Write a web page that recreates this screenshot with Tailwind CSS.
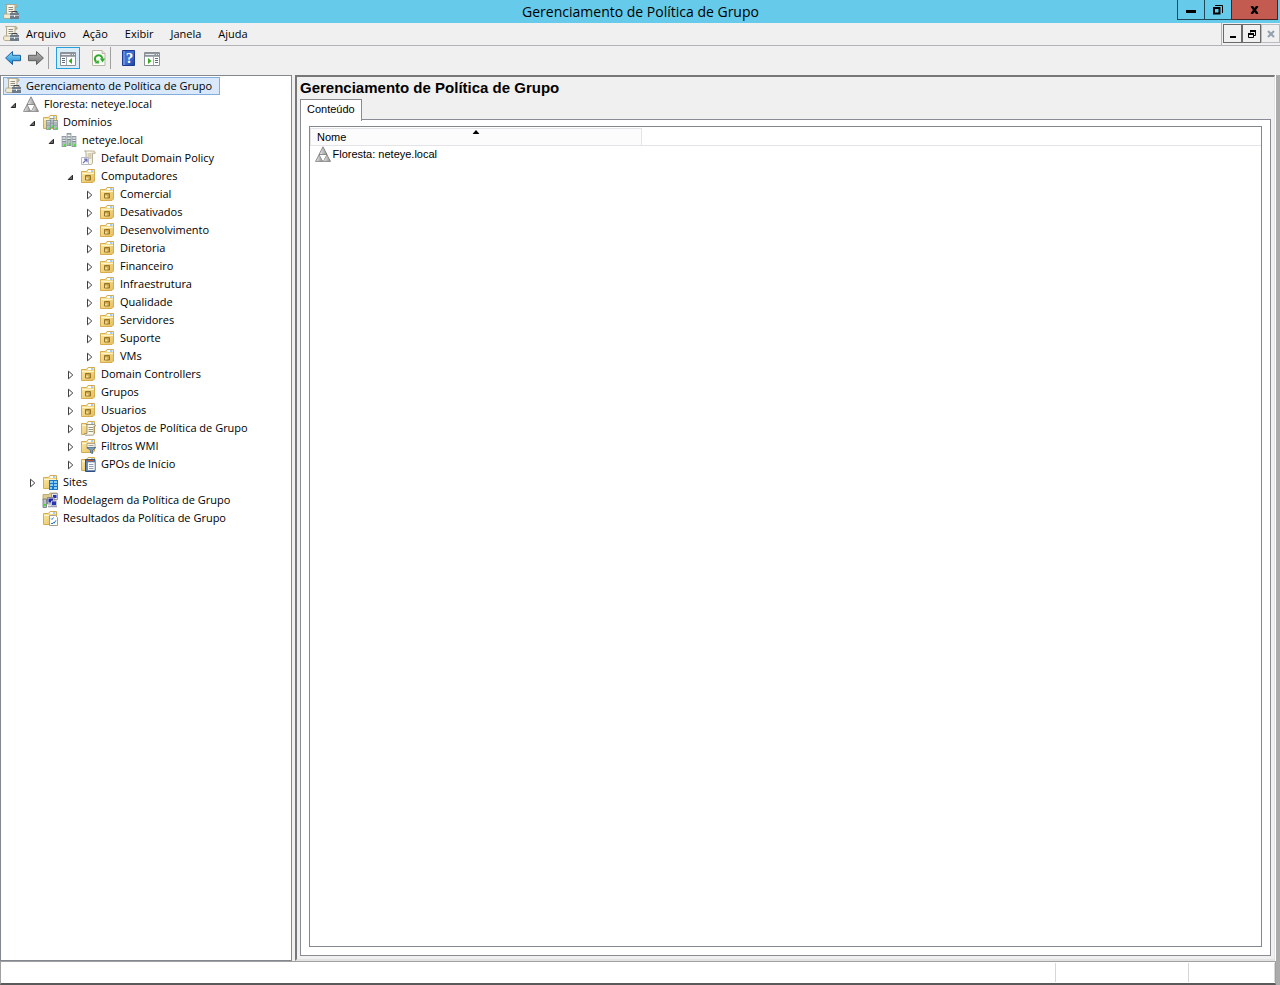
<!DOCTYPE html>
<html lang="pt-BR">
<head>
  <meta charset="UTF-8" />
  <meta name="viewport" content="width=device-width, initial-scale=1.0">
  <title>Gerenciamento de Política de Grupo</title>
  <script src="https://cdn.jsdelivr.net/npm/@tailwindcss/browser@4"></script>
</head>

<body class="h-screen flex flex-col overflow-hidden bg-[#f0f0f0] font-['Open_Sans','Noto_Sans',sans-serif] text-[11px] text-black cursor-default">

  <!-- Icon set -->
  <svg class="absolute size-0" aria-hidden="true">
    <defs>
      <linearGradient id="gFolder" x1="0" y1="0" x2="1" y2="1">
        <stop offset="0" stop-color="#fdeba6" /><stop offset="1" stop-color="#e6bd5c" />
      </linearGradient>
      <linearGradient id="gPaper" x1="0" y1="0" x2="1" y2="0">
        <stop offset="0" stop-color="#e4dabd" /><stop offset="0.3" stop-color="#fffdf2" /><stop offset="1" stop-color="#ece3c9" />
      </linearGradient>
      <linearGradient id="gBlue" x1="0" y1="0" x2="0" y2="1">
        <stop offset="0" stop-color="#8fdcfa" /><stop offset="1" stop-color="#1686d4" />
      </linearGradient>
      <linearGradient id="gGray" x1="0" y1="0" x2="0" y2="1">
        <stop offset="0" stop-color="#b5b5b5" /><stop offset="1" stop-color="#737373" />
      </linearGradient>
      <linearGradient id="gTri" x1="0" y1="0" x2="1" y2="0">
        <stop offset="0" stop-color="#f0f0f0" /><stop offset="1" stop-color="#8f8f8f" />
      </linearGradient>
      <linearGradient id="gHelp" x1="0" y1="0" x2="1" y2="1">
        <stop offset="0" stop-color="#2f5fc4" /><stop offset="0.5" stop-color="#4672d0" /><stop offset="1" stop-color="#1d3fa0" />
      </linearGradient>
    </defs>

    <symbol id="i-console" viewBox="0 0 16 16">
      <path d="M2.500 .5h10c1 0 1.500 1 1.500 2.500h-2V12H3.500V3C3.500 1.500 3.500.5 2.500.5z" fill="url(#gPaper)" stroke="#a69c80" stroke-width=".8" />
      <path d="M12 .5c1.200 0 2 .7 2 2.500h-2z" fill="#d8ccaa" stroke="#a69c80" stroke-width=".6" />
      <path d="M5.500 3.500H10M5.500 5.500H10M5.500 7.500H9" stroke="#8d8c86" />
      <path d="M.5 12c0-1.200.7-2 1.500-2h6v4.500H2c-.8 0-1.500-1-1.500-2.500z" fill="#f3ead0" stroke="#a69c80" stroke-width=".8" />
      <path d="M9 9V7.500h5V9" fill="none" stroke="#42484e" />
      <path d="M7 9h9v6H7z" fill="#6f7c89" />
      <path d="M7 11.500h9" stroke="#b4bfc9" />
      <path d="M11 11h1v2h-1z" fill="#f2f2f2" />
    </symbol>

    <symbol id="i-forest" viewBox="0 0 16 16">
      <path d="M8 .8 12 8.500H4z" fill="url(#gTri)" stroke="#777" stroke-width=".8" />
      <path d="M4.200 8.500 7.800 15.400H.5z" fill="url(#gTri)" stroke="#777" stroke-width=".8" />
      <path d="M11.800 8.500l3.700 6.900H8.200z" fill="url(#gTri)" stroke="#777" stroke-width=".8" />
      <path d="M4.900 9h6.200L8 14.800z" fill="#fff" />
    </symbol>

    <symbol id="i-folder" viewBox="0 0 16 16">
      <path d="M1.500 3.500h5l1.500-2h6.500v11.500l-1.500 1.500H1.500z" fill="url(#gFolder)" stroke="#d6ac50" />
      <path d="M8.500 2h5.500v2H8z" fill="#fff" />
      <path d="M11 3h2.500" stroke="#4e9de0" />
      <path d="M2 5.500h12" stroke="#fff4c8" />
    </symbol>

    <symbol id="i-ou" viewBox="0 0 16 16">
      <use href="#i-folder" />
      <path d="M5.500 7.500h5v4.500h-5z" fill="#c9a247" stroke="#94742a" />
      <path d="M6 9.500h2.500v2H6z" fill="#f3dc92" />
    </symbol>

    <symbol id="i-server" viewBox="0 0 5 10" preserveAspectRatio="none">
      <path d="M.3.300h4.400v9.400H.3z" fill="#b3bec3" stroke="#66737a" stroke-width=".6" />
      <path d="M1 2h3M1 4h3" stroke="#f6fafb" stroke-width=".9" />
      <path d="M1 3h3M1 5h3" stroke="#5d696e" stroke-width=".6" />
      <path d="M2.400 7.600h1.800v1.700H2.400z" fill="#45e02a" />
    </symbol>

    <symbol id="i-domains" viewBox="0 0 16 16">
      <use href="#i-folder" />
      <use href="#i-server" x="7.500" y="4" width="5" height="10" />
      <use href="#i-server" x="4" y="6" width="5" height="10" />
      <use href="#i-server" x="11" y="6" width="5" height="10" />
    </symbol>

    <symbol id="i-domain" viewBox="0 0 16 16">
      <use href="#i-server" x="5.500" y="1" width="5" height="13" />
      <use href="#i-server" x="0.500" y="4" width="5" height="11" />
      <use href="#i-server" x="10.500" y="4" width="5" height="11" />
    </symbol>

    <symbol id="i-policy" viewBox="0 0 16 16">
      <path d="M4.500 1h9c1.200 0 1.700.8 1.700 2.300h-2.700V12c0 1.500-.6 2.500-1.800 2.500H6V3c0-1.300-.5-2-1.500-2z" fill="url(#gPaper)" stroke="#a99f83" stroke-width=".8" />
      <path d="M7.500 4h4M7.500 6h4M8 8h3.500" stroke="#b0a98e" />
      <path d="M1.500 7.500h7v7h-7z" fill="#fff" stroke="#b8b8c4" />
      <path d="M3 13l3.500-3.500M4 9.200h3v3" fill="none" stroke="#6d70b8" stroke-width="1.200" />
    </symbol>

    <symbol id="i-gpos" viewBox="0 0 16 16">
      <use href="#i-folder" />
      <path d="M6 4.500h8.500c.8 0 1 .6 1 1.500H14v7.500c0 1-.5 1.700-1.300 1.700H5.500c-.8 0-1-.7-1-1.700H7V6c0-1-.3-1.500-1-1.500z" fill="#fbf8ec" stroke="#86806c" stroke-width=".8" />
      <path d="M8.500 7.500H13M8.500 9.500H13M8.500 11.500H13" stroke="#8e8a7a" stroke-width=".9" />
    </symbol>

    <symbol id="i-wmi" viewBox="0 0 16 16">
      <use href="#i-folder" />
      <path d="M7 5.500h8v5H7z" fill="#f8f6ea" stroke="#9a9482" stroke-width=".8" />
      <path d="M8.500 7.500h5" stroke="#8e8a7a" stroke-width=".8" />
      <path d="M7 9.500h8.800l-3.300 3v3.300l-2-1.300v-2z" fill="#7d9cba" stroke="#3a5f86" stroke-width=".7" />
    </symbol>

    <symbol id="i-starter" viewBox="0 0 16 16">
      <use href="#i-folder" />
      <path d="M5.500 3.500h9.500v12H5.500z" fill="#5a86bd" stroke="#2e4f80" />
      <path d="M7.500 6h7.500v8.500H7.500z" fill="#fff" stroke="#4d6c98" stroke-width=".6" />
      <path d="M6.500 4.500h7" stroke="#b3532e" stroke-width="1.500" />
      <path d="M9 8.500h4.500M9 10.500h4.500M9 12.500h4.500" stroke="#8793a8" stroke-width=".9" />
    </symbol>

    <symbol id="i-sites" viewBox="0 0 16 16">
      <use href="#i-folder" />
      <path d="M7 6h9V16H7z" fill="#1477c8" />
      <path d="M8 7h3v2H8zM12 7h3v2h-3zM8 10h3v2H8zM12 10h3v2h-3zM8 13h2v2H8zM12 13h3v2h-3z" fill="#86cdf8" />
    </symbol>

    <symbol id="i-model" viewBox="0 0 16 16">
      <path d="M1 2.500h6l1-1.500h7v7H1z" fill="#dccb92" stroke="#b09c5e" stroke-width=".8" />
      <path d="M9.500 1.500h6v6h-6z" fill="#e4e6ea" stroke="#858b96" stroke-width=".8" />
      <path d="M11 3h3.500v3H11z" fill="#2430b4" />
      <path d="M5.500 5.500h6.500v6.500H5.500z" fill="#dfe3ea" stroke="#70767f" stroke-width=".8" />
      <path d="M6.500 6.500h4.500v4H6.500z" fill="#1a1fa8" />
      <path d="M9.500 9h5v4.500h-5z" fill="#2833b8" stroke="#c3c8d2" />
      <path d="M6 14.500h9" stroke="#9ba1ab" stroke-width="1.500" />
      <path d="M1 7h3.500v8.500H1z" fill="#b7c0c4" stroke="#6c7579" stroke-width=".8" />
      <path d="M1.800 12h2v2h-2z" fill="#45d82a" />
    </symbol>

    <symbol id="i-results" viewBox="0 0 16 16">
      <use href="#i-folder" />
      <path d="M7.500 5.500h6l2 2v8h-8z" fill="#fff" stroke="#9a958a" stroke-width=".9" />
      <path d="M9 8.500l1 1 1.500-2M11 12l1 1.300 2-3M9 13.500h2" fill="none" stroke="#2478c8" />
    </symbol>

    <symbol id="i-back" viewBox="0 0 16 16">
      <path d="M.6 8 7.500 1.500v3.800h8v5.400h-8v3.800z" fill="url(#gBlue)" stroke="#1b62a0" />
    </symbol>

    <symbol id="i-forward" viewBox="0 0 16 16">
      <path d="M15.400 8 8.500 1.500v3.800h-8v5.400h8v3.800z" fill="url(#gGray)" stroke="#5e5e5e" />
    </symbol>

    <symbol id="i-tree" viewBox="0 0 16 14">
      <path d="M.5.500h15v13H.5z" fill="#fff" stroke="#8b9096" />
      <path d="M1 1h14v3H1z" fill="#8d949b" />
      <path d="M1.500 2.500h9M12 2.500h1M14 2.500h1" stroke="#e9ecee" />
      <path d="M1 4.500h14M6.500 5v8" stroke="#a3a9af" />
      <path d="M2 6.500h3M2 8.500h3M2 10.500h3" stroke="#5c6e86" />
      <path d="M12 6v6L8.500 9z" fill="#35ad22" />
    </symbol>

    <symbol id="i-actions" viewBox="0 0 16 14">
      <path d="M.5.500h15v13H.5z" fill="#fff" stroke="#8b9096" />
      <path d="M1 1h14v3H1z" fill="#8d949b" />
      <path d="M1.500 2.500h9M12 2.500h1M14 2.500h1" stroke="#e9ecee" />
      <path d="M1 4.500h14M9.500 5v8" stroke="#a3a9af" />
      <path d="M11 6.500h3M11 8.500h3M11 10.500h3" stroke="#5c6e86" />
      <path d="M4 6v6l3.500-3z" fill="#35ad22" />
    </symbol>

    <symbol id="i-refresh" viewBox="0 0 14 16">
      <path d="M.5.500h9.500l3 3v12H.5z" fill="#fbfbf8" stroke="#b9b6a6" />
      <path d="M10 .5v3h3" fill="#e6e3d5" stroke="#b9b6a6" />
      <path d="M4.300 11.800A3.700 3.700 0 1 1 10.300 8.800" fill="none" stroke="#2eab2a" stroke-width="2" />
      <path d="M7.800 8.600h5.200L10.600 12.500z" fill="#2eab2a" />
      <path d="M2.500 13.200l4.500.300-.5-3.500z" fill="#2eab2a" />
    </symbol>

    <symbol id="i-tri-open" viewBox="0 0 7 7">
      <path d="M5.500 1.200v4.300H1.200z" fill="#6a6a6a" stroke="#262626" />
    </symbol>

    <symbol id="i-tri-closed" viewBox="0 0 6 10">
      <path d="M.5 1.200 4.800 5 .5 8.800z" fill="#fff" stroke="#404040" />
    </symbol>
  </svg>

  <!-- Title bar -->
  <header class="h-[23px] shrink-0 flex items-start bg-[#66caea]">
    <div class="flex-1 pl-[3px] pt-1">
      <svg class="size-4"><use href="#i-console" /></svg>
    </div>
    <h1 class="text-[14px] leading-6">Gerenciamento de Política de Grupo</h1>
    <div class="flex-1 flex justify-end pr-[2px]">
      <button aria-label="Minimizar" class="w-[28px] h-5 border border-t-0 border-[#204858] flex items-center justify-center">
        <svg class="w-[10px] h-[10px]" viewBox="0 0 10 10"><path d="M0 5h10v3H0z" /></svg>
      </button>
      <button aria-label="Restaurar" class="w-[26px] h-5 border-b border-[#204858] flex items-center justify-center">
        <svg class="w-[10px] h-[10px]" viewBox="0 0 10 10" fill="none" stroke="#000"><path d="M1 3h5.500v5.500H1z" stroke-width="2" /><path d="M2 .5h7.500V8" /></svg>
      </button>
      <button aria-label="Fechar" class="w-[47px] h-5 border border-t-0 border-[#4a2320] bg-[#c35b51] flex items-center justify-center">
        <svg class="w-[9px] h-[8px]" viewBox="0 0 9 8"><path d="M1.500 0l6 8M7.500 0l-6 8" stroke="#000" stroke-width="2.400" /></svg>
      </button>
    </div>
  </header>

  <!-- Menu bar -->
  <div class="h-[23px] shrink-0 flex">
    <nav class="flex-1 flex items-center border-b border-r border-[#b2b2b8] pl-[3px]">
      <svg class="size-4 mr-[7px]"><use href="#i-console" /></svg>
      <div class="flex gap-[17px]">
        <button>Arquivo</button>
        <button>Ação</button>
        <button>Exibir</button>
        <button>Janela</button>
        <button>Ajuda</button>
      </div>
    </nav>
    <div class="flex pt-px pl-px border-b border-[#b2b2b8]">
      <button aria-label="Minimizar janela" class="w-[19px] h-[19px] border border-[#6a6a6a] flex items-center justify-center">
        <svg class="w-[8px] h-[8px]" viewBox="0 0 8 8"><path d="M1 6h6v2H1z" /></svg>
      </button>
      <button aria-label="Restaurar janela" class="w-[19px] h-[19px] border border-[#6a6a6a] flex items-center justify-center">
        <svg class="w-[8px] h-[8px]" viewBox="0 0 8 8" fill="none" stroke="#000"><path d="M.5 4v3.500h5V4M2.500 2.500V1M7.500 1v4.500H6" /><path d="M0 4h6M2 1h6" stroke-width="2" /></svg>
      </button>
      <button aria-label="Fechar janela" class="w-[19px] h-[19px] border border-[#b8bcc0] flex items-center justify-center">
        <svg class="w-[8px] h-[8px]" viewBox="0 0 8 8"><path d="M1 1l6 6M7 1L1 7" stroke="#93a1ae" stroke-width="2" /></svg>
      </button>
    </div>
  </div>

  <!-- Toolbar -->
  <div class="h-[29px] shrink-0 flex items-start pl-[5px] pt-px">
    <button aria-label="Voltar" class="mt-[3px]"><svg class="size-4"><use href="#i-back" /></svg></button>
    <button aria-label="Avançar" class="mt-[3px] ml-[7px]"><svg class="size-4"><use href="#i-forward" /></svg></button>
    <span class="w-px h-[22px] ml-1 bg-[#a0a0a0]"></span>
    <button aria-label="Mostrar árvore de console" class="ml-[7px] w-6 h-[22px] border border-[#26a0da] bg-[#d9ecf7] flex items-center justify-center">
      <svg class="mt-px w-4 h-[14px]"><use href="#i-tree" /></svg>
    </button>
    <button aria-label="Atualizar" class="mt-[3px] ml-3"><svg class="w-[14px] h-4"><use href="#i-refresh" /></svg></button>
    <span class="w-px h-[22px] ml-1 bg-[#a0a0a0]"></span>
    <button aria-label="Ajuda" class="mt-[3px] ml-[11px]">
      <svg class="w-[13px] h-4" viewBox="0 0 13 16">
        <path d="M.5.500h12v15H.5z" fill="url(#gHelp)" stroke="#1c3a92" />
        <path d="M2 1v14" stroke="#8fadeb" />
        <text x="7.500" y="13" text-anchor="middle" font-family="Liberation Serif, serif" font-weight="bold" font-size="15" fill="#fff">?</text>
      </svg>
    </button>
    <button aria-label="Mostrar painel de ações" class="mt-[5px] ml-[9px]"><svg class="w-4 h-[14px]"><use href="#i-actions" /></svg></button>
  </div>

  <!-- Panes and status bar, with the strip behind the window at the right -->
  <div class="flex-1 min-h-0 flex flex-col border-r-4 border-[#ababab]">
    <main class="flex-1 min-h-0 flex gap-[3px] pr-px bg-[linear-gradient(to_right,#f0f0f0_50%,#fff_50%)]">
      <aside class="w-[292px] shrink-0 bg-white border border-[#828790] pl-[2px] pt-px overflow-hidden">
        <ul id="tree" role="tree" aria-label="Console"></ul>
      </aside>

      <section class="flex-1 min-w-0 flex flex-col bg-[#f0f0f0] border-t-2 border-l-2 border-t-[#777] border-l-[#777] border-r border-r-[#e3e3e3] border-b-2 border-b-[#e3e3e3] px-[3px] pb-[3px]">
        <h2 class="h-[22px] font-['Liberation_Sans',sans-serif] font-bold text-[15px] leading-[22px]">Gerenciamento de Política de Grupo</h2>
        <div role="tablist" class="flex z-10 font-['Liberation_Sans',sans-serif]">
          <button role="tab" aria-selected="true" class="h-[22px] -mb-[2px] px-[6px] pb-[2px] border border-b-0 border-[#898c95] bg-white text-[11px]">Conteúdo</button>
        </div>
        <div class="flex-1 min-h-0 border border-[#898c95] bg-white pt-[6px] px-2 pb-2 flex">
          <div class="flex-1 border border-[#828790] pt-px font-['Liberation_Sans',sans-serif] text-[11px]">
            <table class="w-full table-fixed border-collapse text-left">
              <thead>
                <tr class="h-[16px]">
                  <th class="relative w-[331px] h-[16px] p-0 pt-px pl-[6px] font-normal leading-[15px] bg-[#fcfcfc] border border-[#e3e3e8]" aria-sort="ascending">
                    Nome
                    <svg class="absolute top-px left-1/2 -translate-x-1/2 w-[7px] h-1" viewBox="0 0 7 4"><path d="M3.500 0L7 4H0z" /></svg>
                  </th>
                  <th class="p-0 border-b border-[#e3e3e8]"></th>
                </tr>
              </thead>
              <tbody>
                <tr>
                  <td class="p-0 pl-1 h-[17px]" colspan="2">
                    <a href="#" class="flex items-center gap-[2px]"><svg class="size-4"><use href="#i-forest" /></svg>Floresta: neteye.local</a>
                  </td>
                </tr>
              </tbody>
            </table>
          </div>
        </div>
      </section>
    </main>

    <footer class="h-[24px] shrink-0 flex border-t border-l border-r border-[#a0a0a0] border-b-2 border-b-[#5a5a5a] bg-white">
      <div class="flex-1 my-px border-r border-[#d7d7d7]"></div>
      <div class="w-[133px] my-px border-r border-[#d7d7d7]"></div>
      <div class="w-[86px] my-px border-r border-[#d7d7d7]"></div>
    </footer>
  </div>

  <script>
    // [depth, icon, label, state]
    const nodes = [
      [0, "console", "Gerenciamento de Política de Grupo", "root"],
      [1, "forest", "Floresta: neteye.local", "open"],
      [2, "domains", "Domínios", "open"],
      [3, "domain", "neteye.local", "open"],
      [4, "policy", "Default Domain Policy", ""],
      [4, "ou", "Computadores", "open"],
      [5, "ou", "Comercial", "closed"],
      [5, "ou", "Desativados", "closed"],
      [5, "ou", "Desenvolvimento", "closed"],
      [5, "ou", "Diretoria", "closed"],
      [5, "ou", "Financeiro", "closed"],
      [5, "ou", "Infraestrutura", "closed"],
      [5, "ou", "Qualidade", "closed"],
      [5, "ou", "Servidores", "closed"],
      [5, "ou", "Suporte", "closed"],
      [5, "ou", "VMs", "closed"],
      [4, "ou", "Domain Controllers", "closed"],
      [4, "ou", "Grupos", "closed"],
      [4, "ou", "Usuarios", "closed"],
      [4, "gpos", "Objetos de Política de Grupo", "closed"],
      [4, "wmi", "Filtros WMI", "closed"],
      [4, "starter", "GPOs de Início", "closed"],
      [2, "sites", "Sites", "closed"],
      [2, "model", "Modelagem da Política de Grupo", ""],
      [2, "results", "Resultados da Política de Grupo", ""],
    ];

    const arrows = {
      open: '<svg class="w-[7px] h-[7px]"><use href="#i-tri-open" /></svg>',
      closed: '<svg class="w-[6px] h-[10px]"><use href="#i-tri-closed" /></svg>',
    };

    document.getElementById("tree").innerHTML = nodes.map(([depth, icon, label, state]) => {
      const image = `<svg class="size-4 shrink-0"><use href="#i-${icon}" /></svg>`;
      if (state === "root") {
        return `<li role="treeitem" aria-selected="true" class="w-fit h-[18px] flex items-center gap-[5px] border border-[#84acdd] bg-[#d9e8fb] pl-px pr-[7px] whitespace-nowrap">${image}${label}</li>`;
      }
      const arrow = arrows[state]
        ? `<button aria-label="${label}" class="w-[19px] h-[18px] pt-[2px] flex items-center justify-center">${arrows[state]}</button>`
        : '<span class="w-[19px]"></span>';
      return `<li role="treeitem" class="h-[18px] flex items-center whitespace-nowrap" style="padding-left:${(depth - 1) * 19 + 1}px">${arrow}${image}<span class="pl-[5px]">${label}</span></li>`;
    }).join("");
  </script>

</body>
</html>
